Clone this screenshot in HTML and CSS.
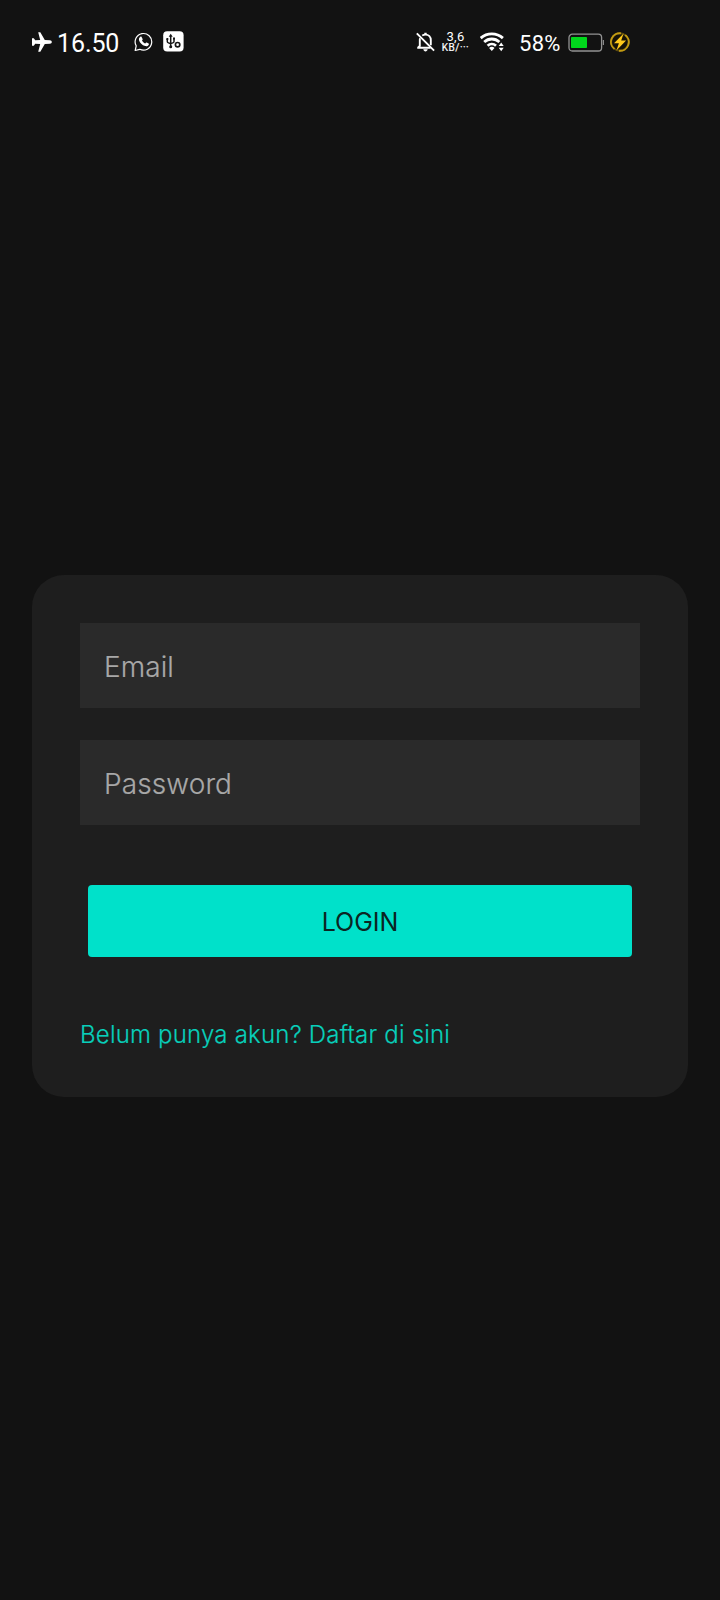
FILE: index.html
```html
<!DOCTYPE html>
<html lang="id">
<head>
<meta charset="utf-8">
<title>Login</title>
<link rel="stylesheet" href="styles.css">
</head>
<body>
<div class="screen">
  <header class="status">
    <div class="status-left">
      <svg class="icon plane" width="20" height="20" viewBox="0 0 20 20"><path fill="#fff" d="M19.800 10c0-1-.8-1.600-1.800-1.700l-5.200-.4L8.300.3H6.200l2 7.700-5 .3L1.800 6.300H0v7.400h1.800l1.400-2 5 .3-2 7.700h2.100l4.500-7.600 5.200-.4c1-.1 1.800-.7 1.800-1.700z"/></svg>
      <span class="time">16.50</span>
      <svg class="icon whatsapp" width="20" height="20" viewBox="0 0 20 20"><path fill="none" stroke="#fff" stroke-width="1.200" stroke-linejoin="round" d="M1.200 18.500l1-4.600A8.300 8.300 0 1 1 5.800 17.300z"/><path fill="#fff" d="M6.300 4.800c.5-.4 1-.4 1.300.1l1 2c.2.500 0 .8-.6 1.500.8 1.500 1.700 2.400 3.200 3 .8-.9 1-1.100 1.500-.9l1.900 1c.5.300.4.800 0 1.400-.7 1-2 1.500-3.400 1.100-3.200-.9-5.300-3.200-6.100-5.600-.4-1.400.1-2.800 1.200-3.600z"/></svg>
      <svg class="icon usb" width="21" height="21" viewBox="0 0 21 21"><rect x=".2" y=".3" width="20.400" height="20.200" rx="4" fill="#fff"/><g fill="none" stroke="#151515" stroke-width="1.500"><path d="M7.700 5v10M4.300 8v2.500q0 1 1.200 1.400l2.200.8M11 7.500v3q0 1-1.200 1.400l-2.100.7"/><circle cx="14.600" cy="13.700" r="2.200" stroke-width="1.700"/></g><path fill="#151515" d="M7.700 2.800l2 3h-4zM3.400 7h1.900v2H3.400zM10 6.600h2v2h-2z"/><circle cx="7.700" cy="15.800" r="1.500" fill="#151515"/></svg>
    </div>
    <div class="status-right">
      <svg class="icon bell" width="20" height="20" viewBox="0 0 20 20"><g fill="none" stroke="#fff" stroke-width="1.900"><path d="M.8 1.300l17.300 17.300"/><path d="M6.200 3.500C7.200 2.900 8.300 2.600 9.500 2.600c3.200 0 5.300 2.400 5.300 5.500v5.100M4 6.200c-.2.600-.2 1.300-.2 2v5.600L2.200 15.500v.3h12.400"/></g><path fill="#fff" d="M8.300.8h2.400v2H8.300zM7.300 17.300h4.400c-.3 1.400-1.100 2.100-2.200 2.100s-1.900-.7-2.200-2.100z"/></svg>
      <div class="speed"><span class="rate">3,6</span><span class="unit">KB/···</span></div>
      <svg class="icon wifi" width="25" height="20" viewBox="0 0 25 20"><g fill="none" stroke="#fff" stroke-width="2.800"><path d="M.7 6.100c6.200-5.700 16-5.700 22.200 0"/><path d="M4.200 10c4.400-4 10.800-4 15.200 0"/><path d="M7.600 13.700c2.400-2.200 6-2.200 8.400 0"/></g><path fill="#fff" d="M9.100 15.900c1.600-1.500 3.800-1.500 5.400 0L11.800 19zM21.200 10.600l2.500 3.500h-5zM21.200 19.200l2.500-3.500h-5z"/></svg>
      <span class="percent">58%</span>
      <svg class="icon battery" width="37" height="19" viewBox="0 0 37 19"><rect x="1" y="1.200" width="32.600" height="16.800" rx="3.300" fill="none" stroke="#929292" stroke-width="1.300"/><path d="M35.400 7v5" stroke="#8a8a8a" stroke-width="1.200"/><rect x="3" y="4" width="16" height="11" rx=".8" fill="#00d71c"/></svg>
      <svg class="icon bolt" width="21" height="21" viewBox="0 0 21 21"><circle cx="9.800" cy="10" r="8.700" fill="#171307" stroke="#58480f" stroke-width="1.900"/><path d="M4.500 17A8.700 8.700 0 0 1 11 1.400M15.200 3A8.700 8.700 0 0 1 9 18.700" fill="none" stroke="#c39b12" stroke-width="1.900"/><path fill="#ffc91c" d="M13.600 1.400L4 11.300h4.900L6.400 18.400l9.700-9.800h-4.900z"/></svg>
    </div>
  </header>
  <main class="main">
    <form class="card">
      <div class="field"><span class="hint email">Email</span></div>
      <div class="field"><span class="hint">Password</span></div>
      <button class="login" type="button">LOGIN</button>
      <a class="register">Belum punya akun? Daftar di sini</a>
    </form>
  </main>
</div>
</body>
</html>
```
FILE: styles.css
```css
* { box-sizing: border-box; }
body { margin: 0; background: #121212; font-family: Inter, "Liberation Sans", sans-serif; }
.screen { width: 720px; height: 1600px; background: #121212; display: flex; flex-direction: column; overflow: hidden; }
.status { height: 84px; flex: none; display: flex; justify-content: space-between; padding: 0 89px 0 32px; color: #fff; }
.status-left, .status-right { display: flex; align-items: center; height: 84px; white-space: nowrap; }
.icon { display: block; flex: none; }
.plane { margin-top: -1px; }
.time { width: 76px; padding-left: 5px; font-family: Roboto, sans-serif; font-size: 25px; line-height: 30px; letter-spacing: -0.1px; margin-top: 3px; }
.whatsapp { margin-left: 6px; margin-top: -1px; }
.usb { margin-left: 9px; margin-top: -1px; }
.bell { margin-top: -1px; }
.speed { width: 29px; margin-left: 5px; margin-right: 10px; display: flex; flex-direction: column; align-items: center; }
.rate { font: 400 13px/11px Roboto, sans-serif; letter-spacing: 0.3px; }
.unit { font: 400 10px/11px Roboto, sans-serif; letter-spacing: 0.5px; -webkit-text-stroke: 0.2px #fff; }
.percent { width: 49px; padding-left: 14px; font-size: 22px; line-height: 26px; margin-top: 4px; font-family: Roboto, sans-serif; letter-spacing: 0.3px; }
.battery { margin-left: 14px; }
.bolt { margin-left: 5px; }
.main { padding: 491px 32px 0; }
.card { height: 522px; padding: 48px 48px 40px; border-radius: 32px; background: #1e1e1e; display: flex; flex-direction: column; }
.field { flex: none; height: 85px; margin-bottom: 32px; padding: 2px 24px 0; background: #2a2a2a; display: flex; align-items: center; }
.hint { font-size: 28px; line-height: 36px; font-weight: 300; letter-spacing: 0.1px; color: #a8a8a8; -webkit-text-stroke: 0.2px #a8a8a8; }
.email { letter-spacing: 0.05px; }
.login { flex: none; height: 72px; margin: 28px 8px 0; padding: 1px 0 0; border: 0; border-radius: 4px; background: #00e1ca; color: #0b2522; font: 400 25px/30px Inter, "Liberation Sans", sans-serif; }
.register { flex: none; margin-top: 63px; font-size: 24px; line-height: 30px; font-weight: 300; letter-spacing: 0.2px; color: #08cfba; -webkit-text-stroke: 0.2px #08cfba; white-space: nowrap; }
```
